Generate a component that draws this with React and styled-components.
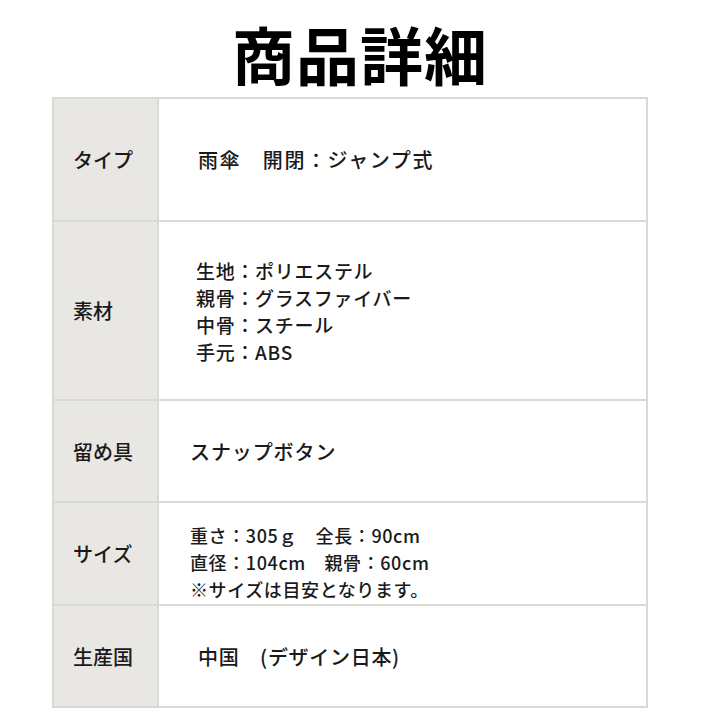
import React from "react";
import styled, { createGlobalStyle } from "styled-components";

const Global = createGlobalStyle`
  html, body { margin: 0; padding: 0; background: #fff; }
  body { font-family: "Noto Sans CJK JP", "Noto Sans", sans-serif; color: #1a1a1a; }
`;

const Page = styled.div`
  width: 720px;
  height: 720px;
  overflow: hidden;
  background: #fff;
`;

const Title = styled.h1`
  margin: 0;
  box-sizing: border-box;
  height: 97px;
  padding-top: 13px;
  line-height: 80px;
  font-size: 63px;
  font-weight: 700;
  text-align: center;
  color: #000;
  letter-spacing: 1px;
`;

const Table = styled.div`
  margin-left: 52px;
  width: 596px;
  box-sizing: border-box;
  display: grid;
  grid-template-columns: 103px 1fr;
  grid-template-rows: 121px 177px 100px 101px 100px;
  gap: 2px;
  padding: 2px;
  background: #dadad5;
`;

const Label = styled.div`
  background: #e8e7e4;
  display: flex;
  align-items: center;
  padding-left: 19px;
  font-size: 20px;
  font-weight: 500;
  color: #1a1a1a;
`;

const Value = styled.div`
  background: #fff;
  display: flex;
  flex-direction: column;
  justify-content: center;
  padding-left: ${(p) => p.$indent}px;
  padding-top: ${(p) => p.$shift || 0}px;
  font-size: ${(p) => p.$size || 20}px;
  letter-spacing: ${(p) => p.$track || 0}px;
  line-height: 27px;
  font-weight: 500;
  color: #1a1a1a;
`;

const Line = styled.div`
  white-space: pre;
`;

const rows = [
  { label: "タイプ", lines: ["雨傘　開閉：ジャンプ式"], indent: 39, size: 20, track: 1.6 },
  {
    label: "素材",
    lines: ["生地：ポリエステル", "親骨：グラスファイバー", "中骨：スチール", "手元：ABS"],
    indent: 37,
    size: 19,
    track: 0.7,
  },
  { label: "留め具", lines: ["スナップボタン"], indent: 31, size: 20, track: 0.9 },
  {
    label: "サイズ",
    lines: ["重さ：305ｇ　全長：90cm", "直径：104cm　親骨：60cm", "※サイズは目安となります。"],
    indent: 31,
    size: 18,
    track: 0.6,
    shift: 18,
  },
  { label: "生産国", lines: ["中国　(デザイン日本)"], indent: 39, size: 20, track: 0.7 },
];

export default function App() {
  return (
    <Page>
      <Global />
      <Title>商品詳細</Title>
      <Table>
        {rows.map((r) => (
          <React.Fragment key={r.label}>
            <Label>{r.label}</Label>
            <Value $indent={r.indent} $size={r.size} $track={r.track} $shift={r.shift}>
              {r.lines.map((l) => (
                <Line key={l}>{l}</Line>
              ))}
            </Value>
          </React.Fragment>
        ))}
      </Table>
    </Page>
  );
}
